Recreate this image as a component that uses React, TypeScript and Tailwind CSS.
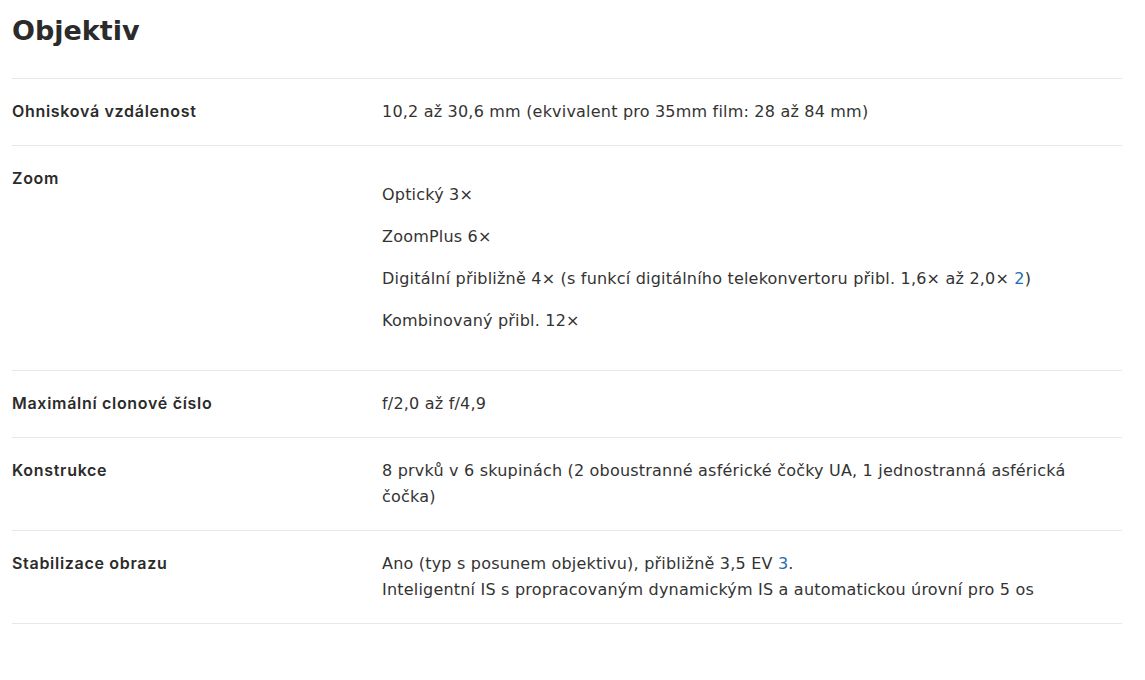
import React from "react";

type Spec = {
  label: string;
  values: React.ReactNode[];
  list?: boolean;
};

const Ref = ({ n }: { n: string }) => (
  <a href="#" className="text-[#1f6eb3]">
    {n}
  </a>
);

const specs: Spec[] = [
  {
    label: "Ohnisková vzdálenost",
    values: ["10,2 až 30,6 mm (ekvivalent pro 35mm film: 28 až 84 mm)"],
  },
  {
    label: "Zoom",
    list: true,
    values: [
      "Optický 3×",
      "ZoomPlus 6×",
      <>
        Digitální přibližně 4× (s funkcí digitálního telekonvertoru přibl. 1,6× až 2,0× <Ref n="2" />)
      </>,
      "Kombinovaný přibl. 12×",
    ],
  },
  {
    label: "Maximální clonové číslo",
    values: ["f/2,0 až f/4,9"],
  },
  {
    label: "Konstrukce",
    values: [
      "8 prvků v 6 skupinách (2 oboustranné asférické čočky UA, 1 jednostranná asférická čočka)",
    ],
  },
  {
    label: "Stabilizace obrazu",
    values: [
      <>
        Ano (typ s posunem objektivu), přibližně 3,5 EV <Ref n="3" />.
      </>,
      "Inteligentní IS s propracovaným dynamickým IS a automatickou úrovní pro 5 os",
    ],
  },
];

export default function App() {
  return (
    <div className="min-h-[680px] bg-white px-3 pt-[13px] text-[#333] font-['DejaVu_Sans',sans-serif]">
      <h2 className="text-[27px] font-bold leading-9 text-[#2b2b2b] mb-[29px]">Objektiv</h2>
      <div className="w-[1110px] border-t border-[#e8e8e8]">
        {specs.map((spec) => (
          <div
            key={spec.label}
            className="grid grid-cols-[370px_1fr] border-b border-[#e8e8e8] py-5 text-base leading-[26px]"
          >
            <div className="font-['Inter',sans-serif] font-semibold tracking-[0.7px] text-[#2b2b2b] -mt-px">
              {spec.label}
            </div>
            {spec.list ? (
              <div className="flex flex-col gap-4 py-4 tracking-[0.2px]">
                {spec.values.map((v, i) => (
                  <p key={i}>{v}</p>
                ))}
              </div>
            ) : (
              <div className="pr-8 tracking-[0.2px]">
                {spec.values.map((v, i) => (
                  <p key={i}>{v}</p>
                ))}
              </div>
            )}
          </div>
        ))}
      </div>
    </div>
  );
}
